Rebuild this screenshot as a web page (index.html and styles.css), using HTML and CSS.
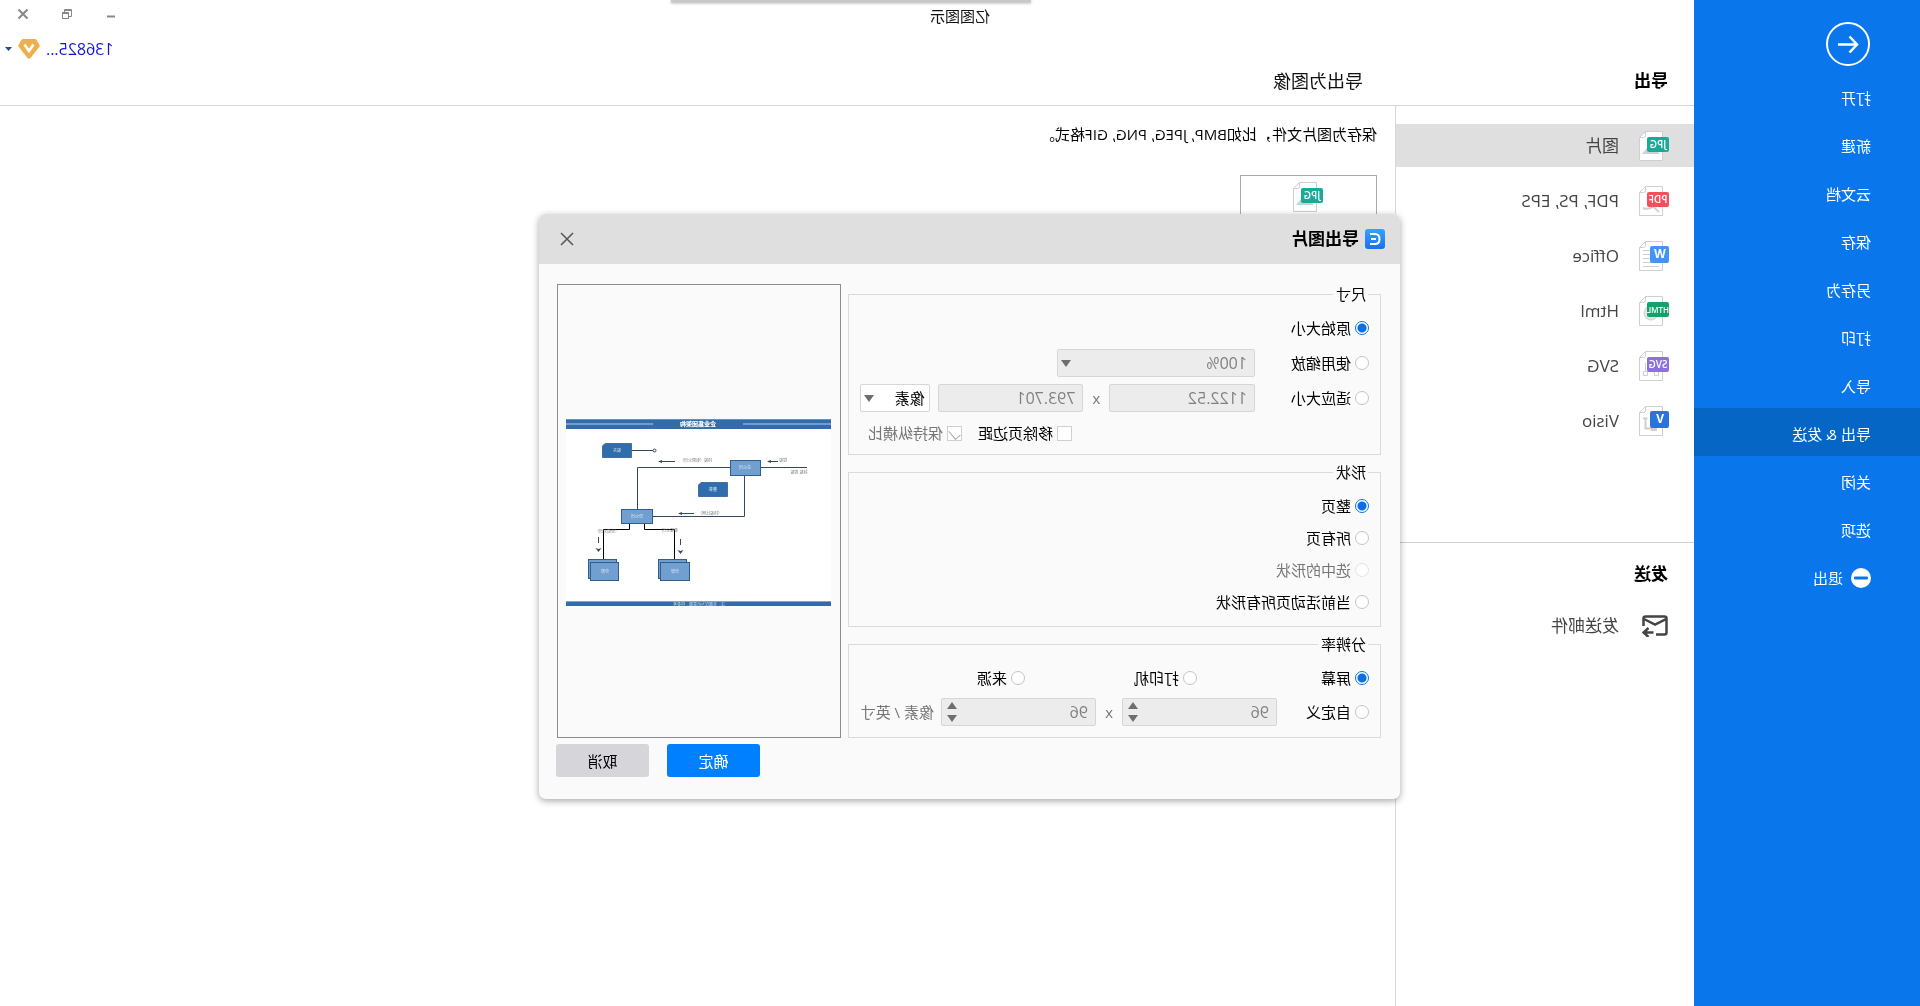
FILE: index.html
```html
<!DOCTYPE html>
<html lang="zh-CN">
<head>
<meta charset="utf-8">
<title>亿图图示</title>
<link rel="stylesheet" href="styles.css">
</head>
<body>
<svg class="defs" aria-hidden="true">
  <linearGradient id="blue" x2="0" y2="1"><stop stop-color="#3aa0fb"/><stop offset="1" stop-color="#1a70f0"/></linearGradient>
  <symbol id="sheet" viewBox="0 0 30 30">
    <path d="M6.500.500H23.500L29.500 6.500V29.500H6.500Z" fill="#fff" stroke="#cfcfcf"/>
    <path d="M23.500.500V4.500Q23.500 6.500 25.500 6.500H29.500" fill="none" stroke="#cfcfcf"/>
  </symbol>
  <symbol id="down" viewBox="0 0 10 7"><path d="M0 0H10L5 7Z" fill="#6e6e6e"/></symbol>
  <symbol id="spin" viewBox="0 0 10 20"><path d="M0 7H10L5 0ZM0 13H10L5 20Z" fill="#6e6e6e"/></symbol>
</svg>

<div class="app">
  <nav class="sidebar">
    <button class="back" aria-label="返回">
      <svg width="44" height="44" viewBox="0 0 44 44" fill="none" stroke="#fff" stroke-width="2"><circle cx="22" cy="22" r="21"/><path d="M32 22.500H13M20.500 14.500L13 22.500L20.500 30.500" stroke-width="2.500"/></svg>
    </button>
    <a href="#">打开</a>
    <a href="#">新建</a>
    <a href="#">云文档</a>
    <a href="#">保存</a>
    <a href="#">另存为</a>
    <a href="#">打印</a>
    <a href="#">导入</a>
    <a href="#" class="current">导出 &amp; 发送</a>
    <a href="#">关闭</a>
    <a href="#">选项</a>
    <a href="#" class="exit"><svg width="20" height="20" viewBox="0 0 20 20"><circle cx="10" cy="10" r="10" fill="#fff"/><rect x="3" y="8.500" width="14" height="3" rx="1" fill="#0a76ec"/></svg>退出</a>
  </nav>

  <div class="workspace">
    <header class="topbar">
      <div class="caption">
        <span class="app-name">亿图图示</span>
        <div class="window-buttons">
          <button aria-label="最小化"><svg width="12" height="12" viewBox="0 0 12 12"><path d="M2 8.500H10" stroke="#888" stroke-width="2"/></svg></button>
          <button aria-label="还原"><svg width="12" height="12" viewBox="0 0 12 12" fill="none" stroke="#888"><path d="M4 8.500H1.500V1.500H8.500V4" /><path d="M1 2.500H9"/><rect x="4.500" y="4.500" width="6" height="6"/><path d="M4 5.500H11"/></svg></button>
          <button aria-label="关闭"><svg width="12" height="12" viewBox="0 0 12 12"><path d="M1.500 1.500L10.500 10.500M10.500 1.500L1.500 10.500" stroke="#888" stroke-width="2"/></svg></button>
        </div>
      </div>
      <a href="#" class="account">
        <span>136825...</span>
        <svg width="22" height="20" viewBox="0 0 22 20"><path d="M5 0H17Q18 0 18.700 1L21.500 6Q22 7 21.300 8L12.500 19Q11 20.500 9.500 19L.700 8Q0 7 .500 6L3.300 1Q4 0 5 0Z" fill="#edb04e"/><path d="M6.500 5.500L11 12L15.500 5.500" fill="none" stroke="#fff" stroke-width="2.500"/></svg>
        <svg width="7" height="4" viewBox="0 0 7 4"><path d="M0 0H7L3.500 4Z" fill="#1f4e96"/></svg>
      </a>
      <div class="headings">
        <h1>导出</h1>
        <h2>导出为图像</h2>
      </div>
    </header>

    <div class="columns">
      <aside class="formats">
        <ul class="format-list">
          <li><a href="#" class="current"><svg class="doc" viewBox="0 0 30 30"><use href="#sheet"/><path d="M9 23L15 17H22L27 23Z" fill="#d0d0d0"/><rect y="6" width="22" height="15" rx="2" fill="#1aab98"/><text x="11" y="17">JPG</text></svg>图片</a></li>
          <li><a href="#"><svg class="doc" viewBox="0 0 30 30"><use href="#sheet"/><path d="M10 26Q17 20 18 17M16 21Q21 24 26 22" fill="none" stroke="#cfcfcf" stroke-width="2"/><rect y="6" width="22" height="15" rx="2" fill="#f5505a"/><text x="11" y="17">PDF</text></svg>PDF, PS, EPS</a></li>
          <li><a href="#"><svg class="doc" viewBox="0 0 30 30"><use href="#sheet"/><path d="M18 9.500H26M18 13.500H26M18 17.500H26M18 21.500H26M10 25.500H26" stroke="#cfcfcf"/><rect y="5" width="19" height="17" rx="2" fill="#4394f8"/><text class="wide" x="9" y="17">W</text></svg>Office</a></li>
          <li><a href="#"><svg class="doc" viewBox="0 0 30 30"><use href="#sheet"/><circle cx="18" cy="17" r="7" fill="#e4e4e4" stroke="#cfcfcf"/><rect y="6" width="22" height="15" rx="2" fill="#16a06c"/><text class="tight" x="11" y="17">HTML</text></svg>Html</a></li>
          <li><a href="#"><svg class="doc" viewBox="0 0 30 30"><use href="#sheet"/><path d="M10.500 20.500H14.500V24.500H10.500ZM21.500 20.500H25.500V24.500H21.500ZM14.500 21Q18 17 21.500 21M23.500 12V20" fill="none" stroke="#cfcfcf"/><rect y="6" width="22" height="15" rx="2" fill="#8a70e0"/><text x="11" y="17">SVG</text></svg>SVG</a></li>
          <li><a href="#"><svg class="doc" viewBox="0 0 30 30"><use href="#sheet"/><path d="M23.500 12V22.500H15M21.500 12.500H26" fill="none" stroke="#cfcfcf" stroke-width="2"/><rect x="12" y="20" width="6" height="5" fill="#cfcfcf"/><rect y="5" width="19" height="17" rx="2" fill="#2873dc"/><text class="wide" x="9" y="17">V</text></svg>Visio</a></li>
        </ul>
        <section class="send">
          <h2>发送</h2>
          <a href="#"><svg width="26" height="22" viewBox="0 0 26 22" fill="none" stroke="#444" stroke-width="2.500"><path d="M12 19.500H3.500Q1.500 19.500 1.500 17.500V3.500Q1.500 1.500 3.500 1.500H22.500Q24.500 1.500 24.500 3.500V11"/><path d="M2 4L13 9.500L24 4"/><path d="M14.500 17.500H25M19.500 13L24.500 17.500L19.500 22"/></svg>发送邮件</a>
        </section>
      </aside>
      <main class="details">
        <p>保存为图片文件，比如BMP, JPEG, PNG, GIF格式。</p>
        <button class="format-card"><svg class="doc" viewBox="0 0 30 30"><use href="#sheet"/><path d="M9 23L15 17H22L27 23Z" fill="#d0d0d0"/><rect y="6" width="22" height="15" rx="2" fill="#1aab98"/><text x="11" y="17">JPG</text></svg></button>
      </main>
    </div>
  </div>

  <div class="top-popup"></div>

  <form class="dialog" role="dialog" aria-labelledby="dialog-title">
    <div class="dialog-bar">
      <svg width="20" height="20" viewBox="0 0 20 20"><rect width="20" height="20" rx="3" fill="url(#blue)"/><path d="M15 5H10Q5.500 5 5.500 10T10 15H15M9 10H14" fill="none" stroke="#fff" stroke-width="2"/></svg>
      <h2 id="dialog-title">导出图片</h2>
      <button type="button" class="close" aria-label="关闭"><svg width="14" height="14" viewBox="0 0 14 14"><path d="M1 1L13 13M13 1L1 13" stroke="#555" stroke-width="1.500"/></svg></button>
    </div>
    <div class="dialog-body">
      <div class="settings">
        <fieldset class="size">
          <legend>尺寸</legend>
          <div class="row"><label><input type="radio" name="size" checked>原始大小</label></div>
          <div class="row">
            <label><input type="radio" name="size">使用缩放</label>
            <span class="box zoom"><select disabled aria-label="缩放"><option>100%</option></select><svg class="arrow"><use href="#down"/></svg></span>
          </div>
          <div class="row">
            <label><input type="radio" name="size">适应大小</label>
            <span class="box length"><input type="text" value="1122.52" disabled aria-label="宽度"></span>
            <span class="times">x</span>
            <span class="box length"><input type="text" value="793.701" disabled aria-label="高度"></span>
            <span class="box unit"><select aria-label="单位"><option>像素</option></select><svg class="arrow"><use href="#down"/></svg></span>
          </div>
          <div class="row checks">
            <label><input type="checkbox">移除页边距</label>
            <label class="off"><input type="checkbox" checked disabled>保持纵横比</label>
          </div>
        </fieldset>
        <fieldset class="shape">
          <legend>形状</legend>
          <div class="row"><label><input type="radio" name="shape" checked>整页</label></div>
          <div class="row"><label><input type="radio" name="shape">所有页</label></div>
          <div class="row"><label class="off"><input type="radio" name="shape" disabled>选中的形状</label></div>
          <div class="row"><label><input type="radio" name="shape">当前活动页所有形状</label></div>
        </fieldset>
        <fieldset class="dpi">
          <legend>分辨率</legend>
          <div class="row thirds">
            <label><input type="radio" name="dpi" checked>屏幕</label>
            <label><input type="radio" name="dpi">打印机</label>
            <label><input type="radio" name="dpi">来源</label>
          </div>
          <div class="row">
            <label><input type="radio" name="dpi">自定义</label>
            <span class="box dots"><input type="number" value="96" disabled aria-label="水平分辨率"><svg class="arrows"><use href="#spin"/></svg></span>
            <span class="times">x</span>
            <span class="box dots"><input type="number" value="96" disabled aria-label="垂直分辨率"><svg class="arrows"><use href="#spin"/></svg></span>
            <span class="per">像素 / 英寸</span>
          </div>
        </fieldset>
      </div>
      <div class="preview">
        <svg width="265" height="187" viewBox="0 0 265 187">
          <rect width="265" height="187" fill="#fff"/>
          <rect width="265" height="10" fill="#346ca8"/>
          <path d="M0 5H88M178 5H265" stroke="#6f9fd2" stroke-width="2"/>
          <path d="M0 .500H265" stroke="#5f93c8"/>
          <text class="name" x="133" y="7">企业集团架构</text>
          <rect y="182" width="265" height="5" fill="#346ca8"/>
          <path d="M0 182.500H265" stroke="#7fa6cf"/>
          <text x="132" y="187" fill="#cfdcf0">注：本图仅为示意图，供参考</text>
          <g fill="none" stroke="#34495c">
            <path d="M24 48.500H70M101 48.500H193.500V90M86.500 57V97.500H178M178 31.500H199"/>
            <circle cx="176.500" cy="31.500" r="1.500"/>
            <path d="M156 42.500H170M53 42.500H62M137 94.500H150M232.500 118V124M150.500 120V126"/>
          </g>
          <path d="M201.500 105V110.500H227.500V140M186.500 105V110.500H156.500V140" fill="none" stroke="#000"/>
          <path d="M173 42.500L169 41V44ZM64 42.500L60 41V44ZM153 94.500L149 93V96ZM232.500 133L229.500 129L232.500 130L235.500 129ZM150.500 135L147.500 131L150.500 132L153.500 131Z" fill="#34495c"/>
          <g fill="#2f6dac" stroke="#456f9c">
            <path d="M199.500 24.500H226L228.500 27V38.500H199.500Z"/>
            <path d="M103.500 63.500H130L132.500 66V77.500H103.500Z"/>
          </g>
          <g fill="#719fd0" stroke="#2f5d8c">
            <rect x="70.500" y="41.500" width="30" height="15"/>
            <rect x="178.500" y="90.500" width="31" height="14"/>
            <rect x="214.500" y="140.500" width="28" height="19"/>
            <rect x="212.500" y="143.500" width="28" height="18"/>
            <rect x="144.500" y="140.500" width="28" height="19"/>
            <rect x="141.500" y="143.500" width="29" height="18"/>
          </g>
          <g fill="#dfe9f5">
            <text x="214" y="33">股东</text><text x="118" y="72">董事</text>
            <text x="86" y="50">总公司</text><text x="194" y="99">分公司</text>
            <text x="226" y="154">分部</text><text x="156" y="154">分部</text>
          </g>
          <g fill="#777">
            <text x="135" y="43">持股（有限公司）</text><text x="48" y="43">控股</text>
            <text x="32" y="55">持股 控股</text><text x="121" y="96">（持股比例）</text>
            <text x="224" y="114">（全资公司）</text><text x="161" y="113">参股公司</text>
          </g>
        </svg>
      </div>
      <div class="actions">
        <button type="button" class="ok">确定</button>
        <button type="button" class="cancel">取消</button>
      </div>
    </div>
  </form>
</div>
</body>
</html>
```
FILE: styles.css
```css
* { box-sizing: border-box; }
body {
  margin: 0;
  background: #fff;
  color: #111;
  font: 15px/20px "Open Sans", "Noto Sans CJK SC", sans-serif;
  overflow-x: hidden;
}
h1, h2, p, ul { margin: 0; padding: 0; font-size: 17px; }
ul { list-style: none; }
a { color: inherit; text-decoration: none; }
button, input, select { margin: 0; padding: 0; border: 0; background: none; color: inherit; font: inherit; }
svg { flex: none; display: block; }
.defs { position: absolute; width: 0; height: 0; }

/* The whole interface is shown mirrored, left to right */
.app {
  position: relative;
  display: grid;
  grid-template-columns: 226px 1fr;
  min-height: 100vh;
  transform: scaleX(-1);
  overflow: hidden;
}

.sidebar {
  display: flex;
  flex-direction: column;
  padding-top: 22px;
  background: #0a76ec;
  color: #fff;
}
.back { width: 44px; height: 44px; margin: 0 0 6px 50px; }
.sidebar a { display: flex; align-items: center; height: 48px; padding: 4px 0 0 49px; }
.sidebar a.current { background: #0566c6; }
.sidebar .exit { gap: 8px; }

.workspace { display: flex; flex-direction: column; min-width: 0; }
.topbar { height: 106px; border-bottom: 1px solid #d8d8d8; }
/* Starts under the sidebar so that the name is centred on the window */
.caption { display: grid; grid-template-columns: 1fr auto 1fr; height: 32px; margin-left: -226px; align-items: center; }
.app-name { grid-column: 2; }
.window-buttons { display: flex; justify-content: flex-end; gap: 32px; padding: 0 17px 4px 0; }
.account { display: flex; align-items: center; justify-content: flex-end; gap: 6px; height: 33px; padding-right: 5px; color: #1414d8; font-size: 16px; }
.headings { display: grid; grid-template-columns: 298px 1fr; padding-top: 1px; line-height: 30px; }
.headings h1 { padding-left: 26px; color: #000; }
.headings h2 { padding-left: 33px; font-size: 18px; font-weight: 400; }

.columns { display: grid; grid-template-columns: 299px 1fr; flex: 1; }
.formats { border-right: 1px solid #d8d8d8; color: #444; font-size: 17px; }
.format-list { display: flex; flex-direction: column; gap: 12px; padding: 18px 0 100px; border-bottom: 1px solid #d0d0d0; }
.format-list a { display: flex; align-items: center; gap: 20px; height: 43px; padding-left: 25px; }
.format-list a.current { background: #dfdfdf; }
.doc { width: 30px; height: 30px; }
.doc text { fill: #fff; font: 600 10px "Open Sans", sans-serif; text-anchor: middle; }
.doc text.wide { font-size: 12px; font-weight: 700; }
.doc text.tight { font-size: 8px; }
.send { padding: 16px 0 0 26px; }
.send h2 { line-height: 30px; color: #000; }
.send a { display: flex; align-items: center; gap: 23px; height: 42px; margin-top: 16px; }

.details { padding: 17px 18px; color: #000; }
.details p { font-size: 15px; line-height: 22px; }
.format-card { display: flex; justify-content: center; width: 137px; height: 137px; margin-top: 30px; padding-top: 6px; border: 1px solid #aaa; }

/* Edge of a panel tucked above the window */
.top-popup { position: absolute; top: 0; left: 889px; width: 360px; height: 2px; background: #c8c8c8; box-shadow: 0 1px 3px #999; }

.dialog {
  position: absolute;
  left: 520px;
  top: 214px;
  width: 861px;
  border-radius: 7px;
  background: #fafafa;
  box-shadow: 0 2px 7px rgba(0, 0, 0, .35);
  color: #000;
  overflow: hidden;
}
.dialog-bar { display: flex; align-items: center; gap: 6px; height: 50px; padding: 0 21px 0 15px; background: #dfdfdf; }
.dialog-bar .close { margin-left: auto; }
.dialog-body { display: grid; grid-template-columns: 533px 284px; column-gap: 7px; padding: 20px 18px 22px 19px; }
.settings { display: flex; flex-direction: column; gap: 7px; }

fieldset { display: flex; flex-direction: column; min-width: 0; margin: 0; padding: 10px 11px; border: 1px solid #dadada; }
legend { margin-left: 1px; padding: 0 3px 0 2px; line-height: 20px; }
.size { row-gap: 7px; padding-bottom: 7px; }
.shape { row-gap: 4px; }
.dpi { row-gap: 6px; padding-bottom: 11px; }
.row { display: flex; align-items: center; height: 28px; }
.row label { display: flex; align-items: center; gap: 4px; flex: none; }
.size .row:not(.checks) label { width: 114px; }
.dpi .row:not(.thirds) label { width: 92px; }
.thirds { display: grid; grid-template-columns: 172px 172px 1fr; }
.checks { justify-content: flex-end; gap: 16px; padding-right: 8px; }
.off, .times, .per { color: #777; }
.times { width: 26px; text-align: center; }
.per { margin-left: 7px; white-space: nowrap; }

input[type="radio"], input[type="checkbox"] { appearance: none; flex: none; background: #fff; border: 1px solid #c4c4c4; }
input[type="radio"] { width: 14px; height: 14px; border-radius: 50%; }
input[type="radio"]:checked { border-color: #0a76ec; background: radial-gradient(circle, #0a6fe6 4px, #fff 5px); }
input[type="radio"]:disabled { border-color: #e4e4e4; }
input[type="checkbox"] { width: 15px; height: 15px; border-color: #d0d0d0; }
input[type="checkbox"]:checked { display: grid; place-items: center; }
input[type="checkbox"]:checked::after { content: ""; width: 6px; height: 10px; border: solid #aaa; border-width: 0 1px 1px 0; transform: rotate(40deg); }

.box { position: relative; height: 28px; border: 1px solid #d6d6d6; border-radius: 2px; background: #fff; }
.box:has(:disabled) { background: #ececec; color: #808080; font-size: 16px; }
.box input, .box select { width: 100%; height: 100%; padding-left: 7px; appearance: none; opacity: 1; color: inherit; }
.box input::-webkit-inner-spin-button { appearance: none; margin: 0; }
.arrow { position: absolute; right: 3px; top: 10px; width: 10px; height: 7px; }
.arrows { position: absolute; right: 5px; top: 3px; width: 10px; height: 20px; }
.zoom { width: 198px; }
.length { width: 146px; }
.unit { width: 70px; margin-left: 8px; }
.unit select { padding-left: 4px; }
.dots { width: 155px; }

.preview { display: grid; place-items: center; height: 454px; padding-top: 2px; border: 1px solid #8c8c8c; }
.preview text { font: 4px "Noto Sans CJK SC", sans-serif; text-anchor: middle; }
.preview .name { font-size: 6px; font-weight: 900; fill: #fff; }
.actions { grid-column: 2; display: flex; justify-content: flex-end; gap: 18px; margin: 6px -1px 0 0; }
.actions button { width: 93px; height: 33px; border-radius: 3px; }
.ok { background: #007fff; color: #fff; }
.cancel { background: #d5d5da; }
```
